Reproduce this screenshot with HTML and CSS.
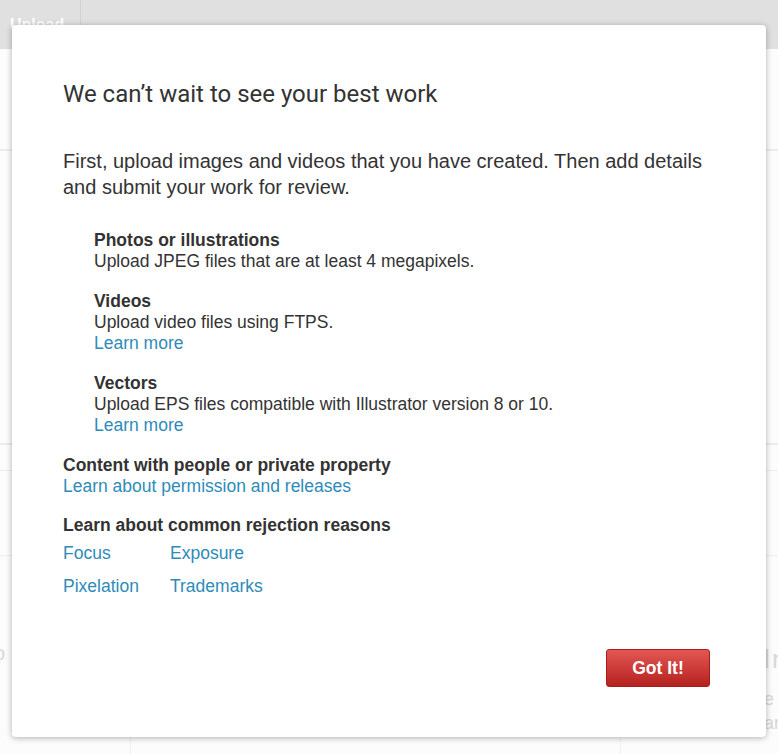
FILE: index.html
```html
<!DOCTYPE html>
<html lang="en">
<head>
	<meta charset="utf-8">
	<title>Upload</title>
	<meta name="viewport" content="width=device-width, initial-scale=1">
	<link rel="stylesheet" href="styles.css">
</head>
<body>
	<div class="page">
		<div class="topbar">
			<div class="tab">Upload</div>
		</div>
		<div class="page_body">
			<div class="band band_a"></div>
			<div class="band band_b"></div>
			<div class="band band_c"></div>
			<div class="band band_d">
				<div class="ghost_left">o</div>
				<div class="ghost_right">
					<div class="ghost_title">l n</div>
					<div class="ghost_line">e <u>S</u></div>
					<div class="ghost_line">ar</div>
				</div>
			</div>
		</div>
	</div>

	<div class="overlay">
		<div class="modal">
			<h2>We can’t wait to see your best work</h2>
			<p class="intro">First, upload images and videos that you have created. Then add details and submit your work for review.</p>

			<div class="types">
				<div class="type">
					<strong>Photos or illustrations</strong>
					<span>Upload JPEG files that are at least 4 megapixels.</span>
				</div>
				<div class="type">
					<strong>Videos</strong>
					<span>Upload video files using FTPS.</span>
					<a href="#">Learn more</a>
				</div>
				<div class="type">
					<strong>Vectors</strong>
					<span>Upload EPS files compatible with Illustrator version 8 or 10.</span>
					<a href="#">Learn more</a>
				</div>
			</div>

			<div class="info">
				<strong>Content with people or private property</strong>
				<a href="#">Learn about permission and releases</a>
			</div>

			<div class="info">
				<strong>Learn about common rejection reasons</strong>
				<div class="reasons">
					<a href="#">Focus</a>
					<a href="#">Exposure</a>
					<a href="#">Pixelation</a>
					<a href="#">Trademarks</a>
				</div>
			</div>

			<div class="footer">
				<button class="btn_red">Got It!</button>
			</div>
		</div>
	</div>
</body>
</html>
```

FILE: styles.css
```css
html, body {
	margin: 0;
	padding: 0;
}
body {
	font-family: "Liberation Sans", Arial, sans-serif;
	color: #333;
	background: #fcfcfc;
	overflow: hidden;
}
.page {
	height: 754px;
}
.topbar {
	height: 49px;
	background: #e0e0e0;
	display: flex;
}
.tab {
	width: 81px;
	border-right: 1px solid #d2d2d2;
	color: #fff;
	font-size: 16px;
	font-weight: bold;
	padding: 16px 0 0 10px;
	box-sizing: border-box;
}
.page_body {
	display: flex;
	flex-direction: column;
}
.band_a {
	height: 100px;
	border-bottom: 2px solid #ececec;
}
.band_b {
	height: 292px;
	border-bottom: 2px solid #ececec;
}
.band_c {
	height: 25px;
	border-bottom: 1px solid #efefef;
}
.band_d {
	height: 200px;
	border-top: 1px solid #efefef;
	margin-top: 84px;
	display: flex;
	justify-content: space-between;
	color: #d8d8d8;
}
.ghost_left {
	width: 131px;
	border-right: 1px solid #f0f0f0;
	box-sizing: border-box;
	padding-top: 86px;
	font-size: 20px;
	text-indent: -6px;
}
.ghost_right {
	width: 158px;
	border-left: 1px solid #f0f0f0;
	padding: 85px 0 0 143px;
	box-sizing: border-box;
	font-size: 18px;
	line-height: 24px;
	white-space: nowrap;
}
.ghost_title {
	font-size: 26px;
	line-height: 36px;
	margin-bottom: 10px;
	word-spacing: -5px;
}

.overlay {
	position: absolute;
	top: 0;
	left: 0;
	right: 0;
	bottom: 0;
}
.modal {
	position: absolute;
	top: 25px;
	left: 12px;
	width: 754px;
	height: 712px;
	box-sizing: border-box;
	padding: 55px 51px 50px 51px;
	background: #fff;
	border-radius: 4px;
	box-shadow: 0 1px 6px rgba(0, 0, 0, 0.3);
	display: flex;
	flex-direction: column;
}
.modal h2 {
	margin: 0;
	font-family: Roboto, "Liberation Sans", sans-serif;
	font-weight: 400;
	font-size: 24px;
	line-height: 28px;
	color: #333;
}
.intro {
	margin: 40px 0 0 0;
	font-size: 20px;
	line-height: 26px;
}
.modal a {
	color: #2e8bb9;
	text-decoration: none;
}
.modal strong, .modal span, .modal a {
	display: block;
}
.types {
	margin: 30px 0 0 31px;
	font-size: 17.5px;
	line-height: 21px;
}
.type {
	margin-bottom: 19px;
}
.info {
	font-size: 17.5px;
	line-height: 21px;
	margin-bottom: 18px;
}
.reasons {
	display: grid;
	grid-template-columns: 107px auto;
	row-gap: 12px;
	margin-top: 7px;
}
.footer {
	margin-top: auto;
	display: flex;
	justify-content: flex-end;
	padding-right: 5px;
}
.btn_red {
	width: 104px;
	height: 38px;
	border: 1px solid #a81d1b;
	border-radius: 3px;
	background: linear-gradient(#e35753, #b52220);
	color: #fff;
	font-family: "Liberation Sans", Arial, sans-serif;
	font-weight: bold;
	font-size: 17.5px;
}
```
